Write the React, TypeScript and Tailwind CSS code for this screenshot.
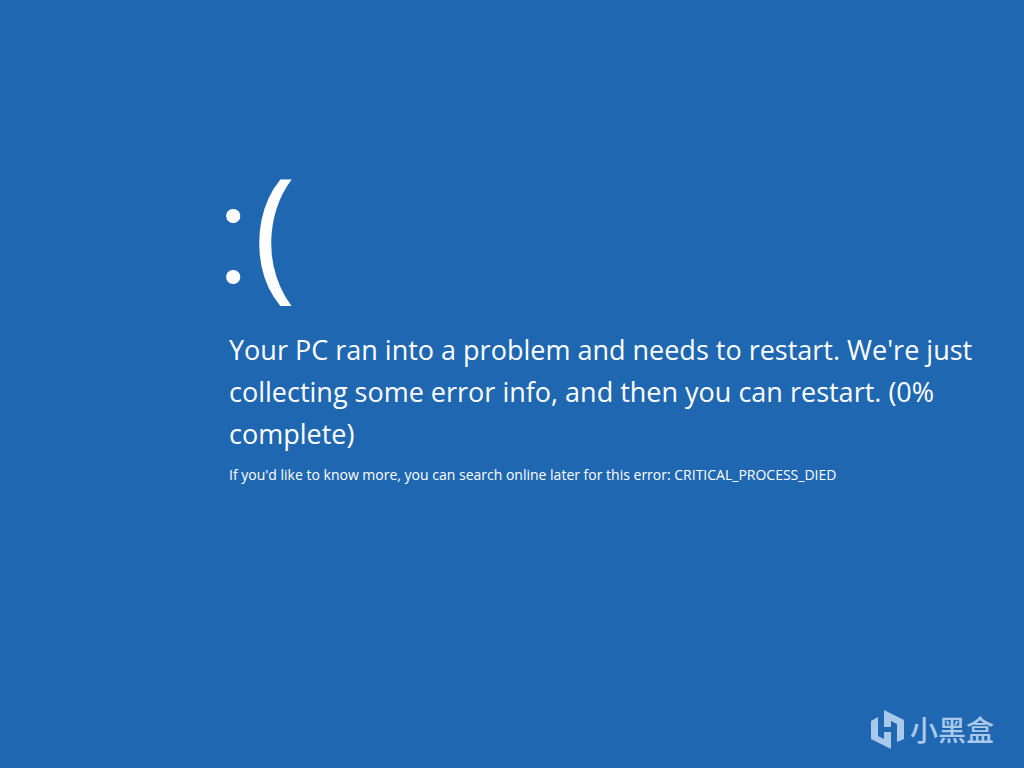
import React from 'react';

const stopCode = 'CRITICAL_PROCESS_DIED';

const Logo: React.FC<{ className?: string }> = ({ className }) => (
  <svg className={className} viewBox="0 0 34 40" fill="currentColor" aria-hidden="true">
    <path d="M14 0 34 10V29L27 32V14L21 11V17H14z" />
    <path d="M1 11 8 7V26L14 29V22H21V39L1 29z" />
  </svg>
);

const App: React.FC = () => {
  const progress = 0;

  return (
    <div className="min-h-screen flex flex-col bg-[#2067b2] text-white font-['Open_Sans','Noto_Sans_CJK_SC',sans-serif]">
      <main className="flex-1 pl-[229px] pr-12 pt-32">
        <div className="-ml-3.5 flex items-baseline gap-0.5 text-[144px] leading-[192px]">
          <span className="font-['Lato',sans-serif] text-[152px] font-light">:</span>
          <span>(</span>
        </div>
        <h1 className="mt-1.5 text-[27px] leading-[42px]">
          Your PC ran into a problem and needs to restart. We're just collecting some error info, and then you can restart. ({progress}% complete)
        </h1>
        <p className="mt-2 text-sm leading-6">
          If you'd like to know more, you can search online later for this error: {stopCode}
        </p>
      </main>
      <footer className="flex items-center justify-end gap-1.5 pr-[30px] pb-[18px] text-[#a9c9eb]">
        <Logo className="w-[34px] h-10" />
        <span className="text-[28px] leading-10 font-medium">小黑盒</span>
      </footer>
    </div>
  );
};

export default App;
